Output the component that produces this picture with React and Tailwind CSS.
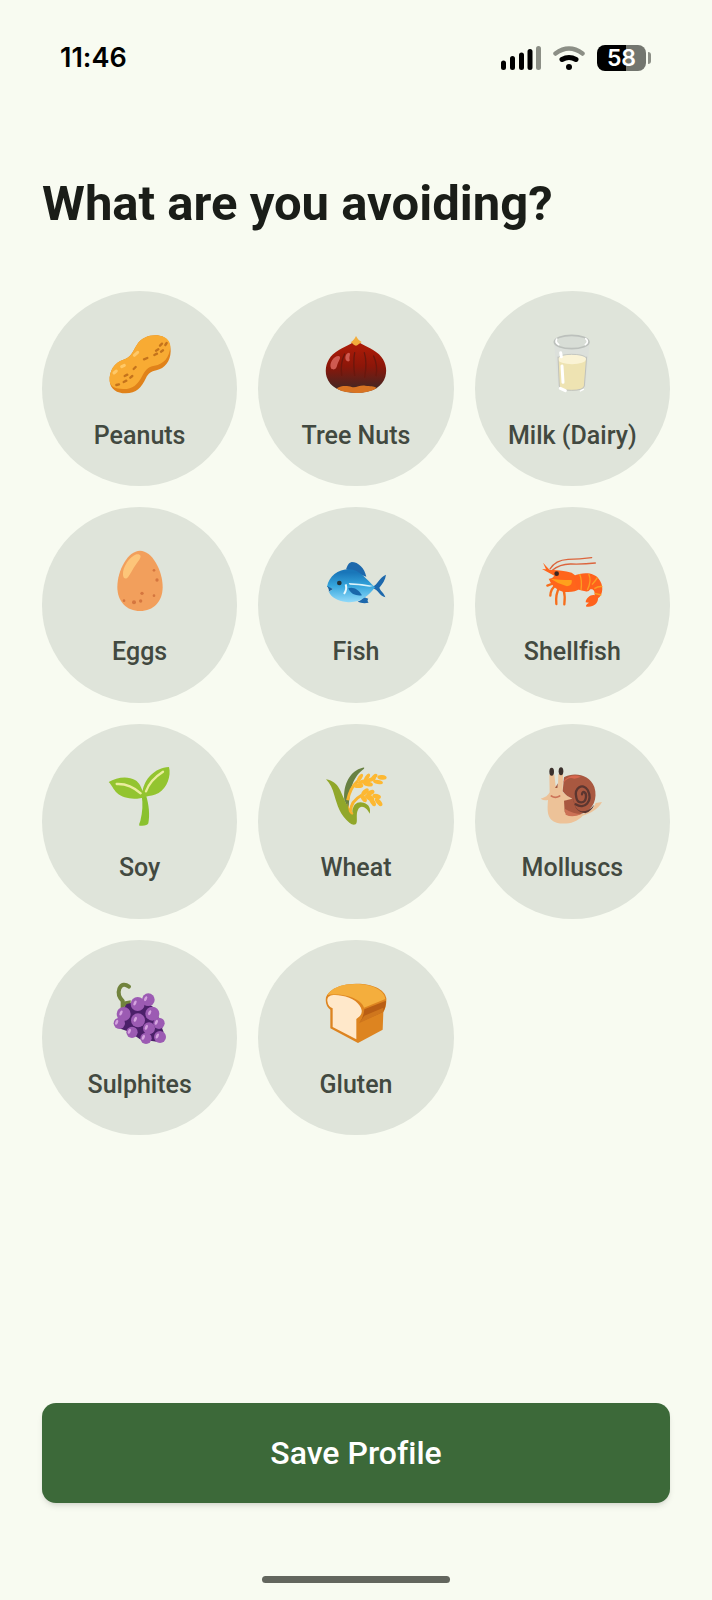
function Peanut() {
    return (
        <svg viewBox="52 37 192 192" className="size-16" aria-hidden="true">
            <path d="M57 184C55 154 72 127 98 120C120 115 126 96 138 77C152 53 180 44 207 48C228 51 241 70 240 95C239 126 223 146 197 152C181 155 173 161 166 175C153 203 137 221 105 221C79 221 59 209 57 184Z" fill="#e0821a" />
            <path d="M57 184C55 154 72 127 98 120C120 115 126 96 138 77C152 53 180 44 207 48C228 51 240 66 239 81C236 113 220 133 191 138C171 141 163 153 155 168C140 197 124 209 97 208C76 207 59 203 57 184Z" fill="#f8ab33" />
            <g stroke="#c4731c" strokeWidth="7" strokeLinecap="round">
                <path d="M208 78l6-6M224 76l4-6M196 93l7-4M211 96l6-4M191 106l8-4M160 119l10-4M129 148l6-6M102 169l8-4M119 174l6-5M99 187l8-4M77 196l8-2" />
            </g>
            <g stroke="#ffc968" strokeWidth="9" strokeLinecap="round">
                <path d="M131 107l10-9M93 141l8-4M70 160l7-6" />
            </g>
        </svg>
    );
}

function Chestnut() {
    return (
        <svg viewBox="42 36 192 192" className="size-16" aria-hidden="true">
            <defs>
                <linearGradient id="nut" x1="0" y1="0" x2="0" y2="1">
                    <stop offset="0.15" stopColor="#a81b08" />
                    <stop offset="0.5" stopColor="#8c1609" />
                    <stop offset="0.9" stopColor="#482521" />
                </linearGradient>
            </defs>
            <path d="M138 60C158 78 184 82 207 103C226 121 233 148 226 170C217 199 190 218 139 218C88 218 60 201 50 171C43 147 50 121 69 103C92 82 119 78 138 60Z" fill="url(#nut)" />
            <path d="M80 205C96 195 114 198 125 201C140 204 150 194 166 197C181 199 190 197 200 204C185 214 165 219 138 219C113 219 94 215 80 205Z" fill="#d87322" />
            <path d="M138 48C142 56 147 62 155 66C148 70 143 77 138 77C132 77 129 71 122 67C130 62 134 56 138 48Z" fill="#f3ad3c" />
            <g fill="none" stroke="#6b170d" strokeWidth="4" strokeLinecap="round">
                <path d="M104 102Q90 130 95 166M134 98Q129 126 134 166M163 98Q172 128 164 171M191 108Q204 138 198 167" />
            </g>
            <path d="M63 145C56 129 72 107 86 108C97 111 84 124 81 138C78 150 67 151 63 145ZM108 121C103 110 109 99 117 98C124 101 116 109 119 119C120 125 112 126 108 121Z" fill="#cf5a50" />
        </svg>
    );
}

function Milk() {
    return (
        <svg viewBox="48 36 192 192" className="size-16" aria-hidden="true">
            <path d="M90 66L103 202Q105 213 143 213Q181 213 184 202L197 66Z" fill="#dce0db" />
            <path d="M102 116L106 198Q109 211 143 211Q178 211 181 198L187 116Z" fill="#eee3b2" />
            <ellipse cx="144" cy="118" rx="42" ry="15" fill="#faf3d5" />
            <path d="M102 110L106 198Q108 211 143 211Q178 211 181 198L188 110" fill="none" stroke="#c0c2bb" strokeWidth="3" />
            <path d="M102 113Q112 103 143 103Q177 103 187 113" fill="none" stroke="#c4c7c1" strokeWidth="3" />
            <ellipse cx="143" cy="66" rx="52" ry="20" fill="#d8ddd6" stroke="#bcc0bc" strokeWidth="5" />
            <path d="M98 57Q93 67 104 74M185 56Q196 65 184 74" fill="none" stroke="#fff" strokeWidth="5" strokeLinecap="round" />
            <path d="M110 98L112 110M114 138L117 187M109 205L124 212" stroke="#fff" strokeWidth="9" strokeLinecap="round" />
            <path d="M169 213L178 208" stroke="#fff" strokeWidth="4" strokeLinecap="round" />
        </svg>
    );
}

function Egg() {
    return (
        <svg viewBox="52 27 192 192" className="size-16" aria-hidden="true">
            <path d="M148 35C184 35 216 94 216 144C216 188 188 216 148 216C108 216 80 188 80 144C80 94 112 35 148 35Z" fill="#f29f5c" />
            <path d="M97 108C95 84 118 52 137 46C150 44 153 52 146 62C134 77 124 95 114 112C107 123 98 120 97 108Z" fill="#fdc579" />
            <g fill="#d5763f">
                <circle cx="190" cy="94" r="4" />
                <circle cx="199" cy="123" r="5" />
                <circle cx="154" cy="163" r="5" />
                <circle cx="190" cy="170" r="4" />
                <circle cx="130" cy="190" r="6" />
                <circle cx="150" cy="186" r="5" />
                <circle cx="100" cy="185" r="4" />
            </g>
        </svg>
    );
}

function Fish() {
    return (
        <svg viewBox="44 27 192 192" className="size-16" aria-hidden="true">
            <defs>
                <linearGradient id="fish" x1="0" y1="0" x2="0" y2="1">
                    <stop offset="0.1" stopColor="#1976b9" />
                    <stop offset="0.5" stopColor="#35a5dc" />
                    <stop offset="1" stopColor="#91dafa" />
                </linearGradient>
            </defs>
            <path d="M110 91C114 82 117 71 127 69C147 69 166 88 171 113ZM145 188Q158 183 163 174L177 179Q172 184 178 191Q160 195 145 188ZM190 143C205 137 210 115 230 107C228 122 221 132 210 146C214 158 224 161 228 175C210 171 207 152 190 148Z" fill="#1d68ac" />
            <path d="M53 143C60 111 84 91 120 91C151 92 171 121 197 145C177 171 151 194 111 189C84 186 66 175 59 159L71 150Z" fill="url(#fish)" />
            <path d="M53 141L71 150L58 158Q61 153 53 141Z" fill="#17609e" />
            <path d="M109 136Q114 151 104 165" fill="none" stroke="#e8f8fd" strokeWidth="6" />
            <path d="M118 132Q161 134 192 141L181 143Q145 137 121 137Z" fill="#ddf3fa" />
            <path d="M117 148C130 142 147 150 158 169C142 171 126 168 117 148Z" fill="#1967aa" />
            <circle cx="90" cy="132" r="7" fill="#253238" />
        </svg>
    );
}

function Shrimp() {
    return (
        <svg viewBox="48 27 192 192" className="size-16" aria-hidden="true">
            <g fill="none" stroke="#dc653d" strokeWidth="4" strokeLinecap="round">
                <path d="M78 90Q94 63 132 61Q167 61 203 56M85 94Q108 74 142 75Q180 76 214 72" />
            </g>
            <g fill="none" stroke="#f66e1c" strokeWidth="7" strokeLinecap="round">
                <path d="M91 132L70 140M97 138Q80 148 79 170M106 145Q94 165 97 195M119 153Q124 171 121 196" />
            </g>
            <path d="M57 71L77 93Q105 91 143 101Q166 113 166 149Q152 162 117 158Q86 150 74 119Q83 121 91 110L54 90L66 91Z" fill="#ff651b" />
            <path d="M80 119Q103 123 143 123Q147 139 129 142Q101 134 80 119Z" fill="#ffa01c" />
            <path d="M148 111C179 97 211 101 224 119C239 137 239 166 222 178C223 193 207 206 188 203C184 202 186 196 195 191L185 190C186 176 202 165 212 169C213 157 209 149 199 151Q193 160 184 157Q174 156 160 151Z" fill="#ff621c" />
            <g fill="none" stroke="#fb9f22" strokeWidth="4">
                <path d="M167 105Q175 125 171 153M194 105Q204 125 190 153M220 116Q215 125 204 137M235 143Q224 141 211 149M232 168L212 163" />
            </g>
            <circle cx="98" cy="104" r="7" fill="#3b2724" />
        </svg>
    );
}

function Seedling() {
    return (
        <svg viewBox="52 33 192 192" className="size-16" aria-hidden="true">
            <path d="M153 127L166 127C175 155 178 188 173 211Q170 220 146 218Q144 214 149 204C156 176 157 154 153 127Z" fill="#8ac12f" />
            <path d="M54 87C77 72 113 68 133 81C147 89 152 105 156 114C161 80 191 44 235 42C242 69 229 105 204 120C190 128 177 128 165 131C137 142 98 138 80 121C66 107 65 98 54 87Z" fill="#93c42f" />
            <g fill="none" stroke="#eaed9d" strokeWidth="7" strokeLinecap="round">
                <path d="M78 93Q117 91 150 121M217 56Q178 81 166 115" />
            </g>
        </svg>
    );
}

function Wheat() {
    return (
        <svg viewBox="42 33 192 192" className="size-16" aria-hidden="true">
            <path d="M103 140C99 93 121 53 158 44Q165 43 162 47C132 69 118 101 116 171Z" fill="#688142" />
            <path d="M113 142Q120 105 143 84M122 176Q121 145 156 126" fill="none" stroke="#f9b42e" strokeWidth="9" />
            <path d="M48 79C68 83 79 91 88 107C98 125 105 150 127 182C126 151 145 144 161 149C177 153 183 168 179 182C171 164 153 152 144 170C136 185 145 206 137 214Q128 217 119 210C89 185 82 157 73 127C68 106 60 92 48 79Z" fill="#91a72a" />
            <path d="M108 132Q112 163 130 181Q128 192 117 176Z" fill="#f9ae2d" />
            <g fill="#fdb832">
                <ellipse cx="150" cy="74" rx="13" ry="6" transform="rotate(-55 150 74)" />
                <ellipse cx="145" cy="98" rx="15" ry="7" />
                <ellipse cx="158" cy="86" rx="15" ry="6" transform="rotate(-15 158 86)" />
                <ellipse cx="171" cy="73" rx="13" ry="6" transform="rotate(-55 171 73)" />
                <ellipse cx="174" cy="93" rx="15" ry="7" transform="rotate(12 174 93)" />
                <ellipse cx="183" cy="80" rx="15" ry="6" transform="rotate(-18 183 80)" />
                <ellipse cx="193" cy="71" rx="11" ry="6" transform="rotate(-40 193 71)" />
                <ellipse cx="204" cy="87" rx="15" ry="6" transform="rotate(12 204 87)" />
                <ellipse cx="216" cy="73" rx="14" ry="7" transform="rotate(5 216 73)" />
                <ellipse cx="165" cy="117" rx="14" ry="7" transform="rotate(-45 165 117)" />
                <ellipse cx="161" cy="136" rx="13" ry="7" transform="rotate(55 161 136)" />
                <ellipse cx="182" cy="119" rx="12" ry="7" transform="rotate(-25 182 119)" />
                <ellipse cx="179" cy="134" rx="15" ry="8" transform="rotate(30 179 134)" />
                <ellipse cx="188" cy="147" rx="14" ry="7" transform="rotate(58 188 147)" />
                <ellipse cx="200" cy="130" rx="13" ry="7" transform="rotate(15 200 130)" />
                <ellipse cx="206" cy="147" rx="15" ry="7" transform="rotate(50 206 147)" />
            </g>
        </svg>
    );
}

function Snail() {
    return (
        <svg viewBox="48 33 192 192" className="size-16" aria-hidden="true">
            <path d="M76 65H91L95 100H102L103 63H117L116 117Q133 133 145 137Q133 145 126 142C126 165 137 180 159 185C191 182 208 171 215 150L234 147C223 168 200 181 176 188C150 218 100 217 82 200C69 188 70 167 72 141Q60 144 50 137Q71 132 77 118Z" fill="#edc298" />
            <path d="M120 73C151 56 197 65 211 102C222 137 207 170 177 181C160 189 133 190 122 177L120 143L145 137Q128 131 116 115Z" fill="#a95840" />
            <path d="M119 84Q142 60 171 71Q160 76 151 77Q132 70 119 89Z" fill="#d6664d" />
            <path d="M122 167Q148 183 173 183Q145 195 125 185Z" fill="#cc7155" />
            <path d="M174 124C174 112 188 116 186 132C184 153 161 153 157 134C149 104 177 88 191 111C208 144 182 171 155 154" fill="none" stroke="#5c3630" strokeWidth="7" strokeLinecap="round" />
            <path d="M149 127Q147 168 172 175Q194 176 211 155Q204 173 184 181Q145 176 149 127Z" fill="#5c3630" />
            <ellipse cx="83" cy="56" rx="7" ry="12" fill="#3b302c" />
            <ellipse cx="111" cy="55" rx="7" ry="12" fill="#3b302c" />
            <path d="M93 105L102 91L100 105Z" fill="#a35a42" />
            <path d="M82 129Q94 137 107 129" fill="none" stroke="#cd7458" strokeWidth="5" strokeLinecap="round" />
        </svg>
    );
}

const grapes = [
    [173, 95, 19],
    [205, 166, 17],
    [86, 166, 17],
    [124, 193, 17],
    [166, 211, 17],
    [208, 207, 18],
    [175, 181, 18],
    [142, 157, 21],
    [185, 137, 21],
    [99, 138, 21],
    [141, 108, 21],
];

function Grapes() {
    return (
        <svg viewBox="52 39 192 192" className="size-16" aria-hidden="true">
            <path d="M96 119V99Q79 82 86 62Q96 42 115 56" fill="none" stroke="#71833d" strokeWidth="12" strokeLinecap="round" />
            <path d="M96 101L120 97V112L96 116Z" fill="#71833d" />
            <path d="M108 108L160 96L198 125L207 161L219 193L199 221L148 214L115 191L85 181L89 136Z" fill="#4b2069" />
            {grapes.map(([x, y, r]) => (
                <g key={`${x}-${y}`}>
                    <circle cx={x} cy={y} r={r} fill="#9c5bb3" />
                    <ellipse cx={x - 8} cy={y - 3} rx="4" ry="8" fill="#d5a4df" transform={`rotate(25 ${x - 8} ${y - 3})`} />
                </g>
            ))}
        </svg>
    );
}

function Bread() {
    return (
        <svg viewBox="702 39 192 192" className="size-16" aria-hidden="true">
            <path d="M708 88C715 69 742 48 798 47C842 46 885 62 889 91Q890 116 880 133L878 185L804 225L721 181V125Q704 112 708 88Z" fill="#dd8420" />
            <path d="M712 81C722 62 755 47 799 48C842 48 884 65 886 93L822 119C816 98 774 74 712 81Z" fill="#f4ae3d" />
            <path d="M823 124L888 98Q888 121 877 133L809 163Q821 147 823 124Z" fill="#b95e14" />
            <path d="M823 143L880 119V132L807 166Z" fill="#cf761d" />
            <path d="M712 99C710 79 733 79 755 83C787 88 812 106 815 127C817 140 807 147 799 153V214L728 177V121Q714 116 712 99Z" fill="#ffe8ca" />
        </svg>
    );
}

function StatusBar() {
    return (
        <header className="flex h-[116px] items-center justify-between pr-[61px] pl-[60px] font-[Inter,sans-serif] text-black">
            <time className="text-[27px] leading-8 font-semibold">11:46</time>
            <div className="flex items-center gap-3">
                <svg viewBox="0 0 40 24" className="h-6 w-10" fill="none" strokeWidth="5" strokeLinecap="round" role="img" aria-label="Signal">
                    <path d="M2.500 17V21.500M11.500 12.500V21.500M20.500 9V21.500M29 5.500V21.500" stroke="#000" />
                    <path d="M37.500 2.500V21.500" stroke="#8c8f86" />
                </svg>
                <svg viewBox="0 0 32 24" className="h-6 w-8" fill="none" strokeLinecap="round" role="img" aria-label="Wi-Fi">
                    <path d="M2.500 7.500Q16 -2.500 29.500 7.500" stroke="#8c8f86" strokeWidth="4.500" />
                    <path d="M9 13.500Q16 9.500 23 13.500" stroke="#000" strokeWidth="5" />
                    <circle cx="16" cy="21" r="3" fill="#000" />
                </svg>
                <div className="flex items-center gap-0.5">
                    <span className="flex h-[26px] w-[49px] items-center justify-center rounded-lg bg-linear-to-r from-black from-60% to-[#73766f] to-60% text-[23px] font-semibold text-white">
                        58
                    </span>
                    <span className="h-3 w-[3px] rounded-r-sm bg-[#8c8f86]" />
                </div>
            </div>
        </header>
    );
}

const allergens = [
    { name: "Peanuts", Icon: Peanut },
    { name: "Tree Nuts", Icon: Chestnut },
    { name: "Milk (Dairy)", Icon: Milk },
    { name: "Eggs", Icon: Egg },
    { name: "Fish", Icon: Fish },
    { name: "Shellfish", Icon: Shrimp },
    { name: "Soy", Icon: Seedling },
    { name: "Wheat", Icon: Wheat },
    { name: "Molluscs", Icon: Snail },
    { name: "Sulphites", Icon: Grapes },
    { name: "Gluten", Icon: Bread },
];

function App() {
    return (
        <div className="flex min-h-screen flex-col bg-[#f8fbf1] font-[Roboto,sans-serif] [font-variant-ligatures:none]">
            <StatusBar />

            <main className="flex grow flex-col px-[42px] pt-14">
                <h1 className="text-[49px] leading-16 font-bold text-[#1a1d18]">What are you avoiding?</h1>

                <div className="mt-[55px] grid grid-cols-3 gap-[21px]">
                    {allergens.map(({ name, Icon }) => (
                        <button
                            key={name}
                            type="button"
                            className="flex aspect-square flex-col items-center justify-center gap-6 rounded-full bg-[#dfe4da] pt-1.5 text-[#424940]"
                        >
                            <Icon />
                            <span className="text-[25px] leading-8 font-medium">{name}</span>
                        </button>
                    ))}
                </div>

                <button
                    type="button"
                    className="mt-auto h-[100px] rounded-[14px] bg-[#3c6939] text-[32px] font-medium text-white shadow-md"
                >
                    Save Profile
                </button>
            </main>

            <footer className="flex justify-center pt-[73px] pb-[17px]">
                <span className="h-[7px] w-[188px] rounded-full bg-[#63665e]" />
            </footer>
        </div>
    );
}

export default App;
